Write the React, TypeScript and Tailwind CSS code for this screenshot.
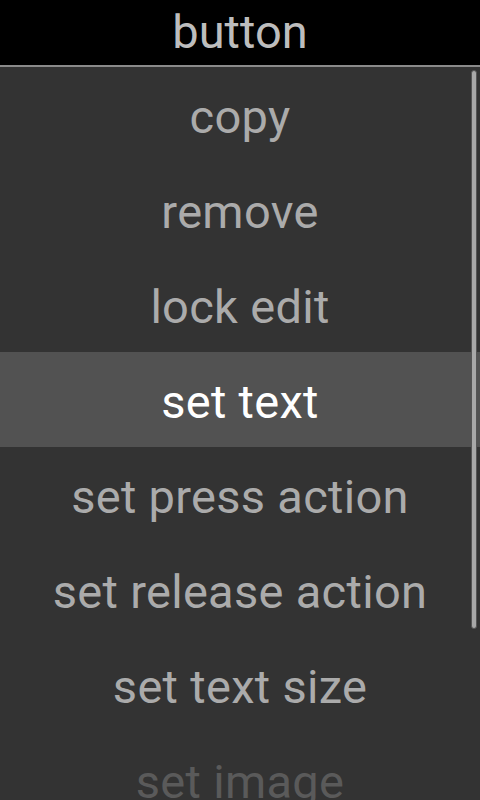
const items = [
  'copy',
  'remove',
  'lock edit',
  'set text',
  'set press action',
  'set release action',
  'set text size',
  'set image',
];

export default function App() {
  return (
    <div
      className="w-[480px] h-[800px] overflow-hidden bg-[#333333] flex flex-col"
      style={{ fontFamily: 'Roboto, "Noto Sans", sans-serif' }}
    >
      {/* Title */}
      <div className="h-[65px] shrink-0 bg-black flex items-center justify-center">
        <span className="text-[47px] leading-none text-[#bdbdbd] pb-[2px]">button</span>
      </div>
      <div className="h-[2px] shrink-0 bg-[#8a8a8a]" />

      {/* Menu list */}
      <div className="relative flex-1">
        <ul className="flex flex-col">
          {items.map((label, i) => (
            <li
              key={label}
              className={`h-[95px] shrink-0 flex items-center justify-center pt-[4px] text-[47px] leading-none tracking-[0.3px] ${
                label === 'set text'
                  ? 'bg-[#525252] text-white'
                  : i === items.length - 1
                    ? 'text-[#5a5a5a]'
                    : 'text-[#ababab]'
              }`}
            >
              {label}
            </li>
          ))}
        </ul>
        {/* Scrollbar */}
        <div className="absolute right-[3px] top-[3px] w-[6px] h-[559px] rounded-full bg-[#a8a8a8] border border-[#555]" />
      </div>
    </div>
  );
}
